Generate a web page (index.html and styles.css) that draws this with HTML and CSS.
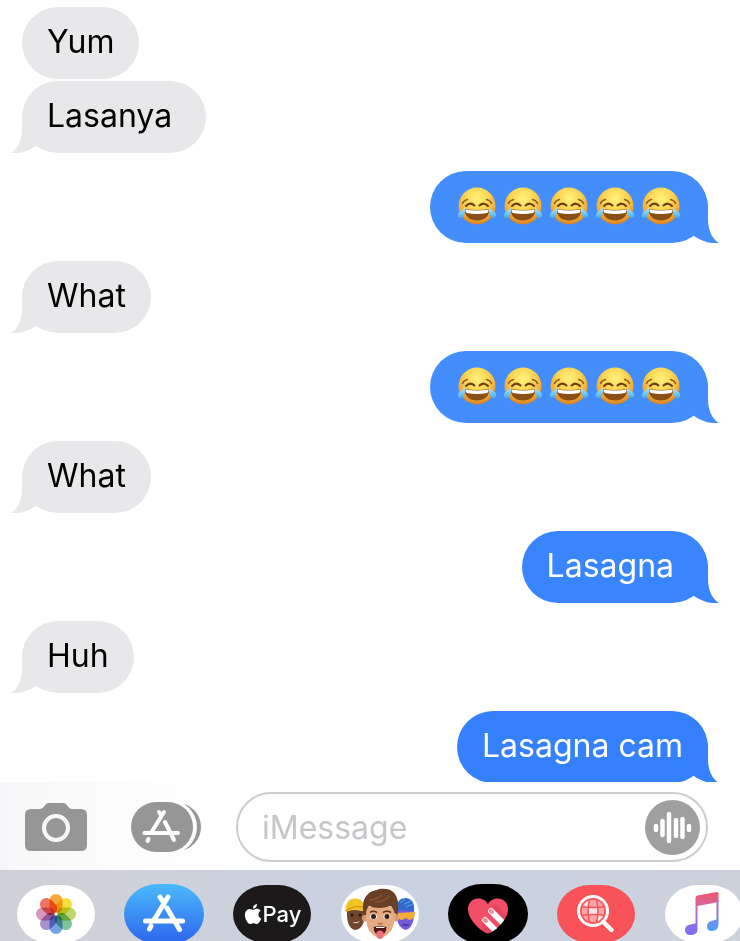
FILE: index.html
```html
<!DOCTYPE html>
<html lang="en">
<head>
    <meta charset="UTF-8">
    <meta name="viewport" content="width=device-width, initial-scale=1">
    <title>Messages</title>
    <link rel="stylesheet" href="styles.css">
</head>
<body>
<!-- shared shapes -->
<svg class="sprite" aria-hidden="true">
    <defs>
        <radialGradient id="face" cx=".5" cy=".3" r=".72">
            <stop offset="0" stop-color="#fff27c"/>
            <stop offset=".45" stop-color="#fbd452"/>
            <stop offset=".8" stop-color="#eda233"/>
            <stop offset="1" stop-color="#d47a1c"/>
        </radialGradient>
        <linearGradient id="tear" x1="0" y1="0" x2="0" y2="1">
            <stop offset="0" stop-color="#b5e9fb"/>
            <stop offset="1" stop-color="#43aee8"/>
        </linearGradient>
        <linearGradient id="note" x1="0" y1="8" x2="0" y2="51" gradientUnits="userSpaceOnUse">
            <stop offset="0" stop-color="#ee5568"/>
            <stop offset=".3" stop-color="#d8669f"/>
            <stop offset=".6" stop-color="#a070d8"/>
            <stop offset="1" stop-color="#7a6cf8"/>
        </linearGradient>
        <linearGradient id="note-right" x1="0" y1="8" x2="0" y2="46" gradientUnits="userSpaceOnUse">
            <stop offset="0" stop-color="#d85a88"/>
            <stop offset=".5" stop-color="#9279dc"/>
            <stop offset="1" stop-color="#4da2fb"/>
        </linearGradient>
        <clipPath id="heart-clip">
            <path d="M40 49.500C36 49.500 20 37 20 25C20 18.500 25 14.500 30.500 14.500C35 14.500 38.500 17 40 20C41.500 17 45 14.500 49.500 14.500C55 14.500 60 18.500 60 25C60 37 44 49.500 40 49.500Z"/>
        </clipPath>
        <clipPath id="globe-clip"><circle cx="37" cy="27" r="12"/></clipPath>
    </defs>
    <symbol id="tail" viewBox="0 0 40 40">
        <path fill="currentColor" d="M28 0V16C28 27 32 36 39 40C30 41 21 38 14 33L0 20Z"/>
    </symbol>
    <symbol id="joy" viewBox="0 0 46 46">
        <circle cx="23" cy="23" r="18.500" fill="url(#face)"/>
        <path d="M8.500 20.500Q9.500 17.500 13.500 16.500M37.500 20.500Q36.500 17.500 32.500 16.500" fill="none" stroke="#935c1d" stroke-width="1.500" stroke-linecap="round"/>
        <path d="M12 23Q16 18.500 20.500 22.500M25.500 22.500Q30 18.500 34 23" fill="none" stroke="#6b3e12" stroke-width="2" stroke-linecap="round"/>
        <path d="M10.500 26Q23 28 35.500 26C35 34 30 37.500 23 37.500C16 37.500 11 34 10.500 26Z" fill="#8a4f14"/>
        <path d="M11.200 26.600Q23 28.400 34.800 26.600Q34.500 29.500 33 30Q23 32 13 30Q11.500 29.500 11.200 26.600Z" fill="#fff"/>
        <path d="M10.500 24.500C12 29 10 35 6.500 35C3.500 35 3 31.500 5 29.500C6.500 28 9 27 10.500 24.500Z" fill="url(#tear)"/>
        <path d="M35.500 24.500C34 29 36 35 39.500 35C42.500 35 43 31.500 41 29.500C39.500 28 37 27 35.500 24.500Z" fill="url(#tear)"/>
    </symbol>
</svg>

<main class="messages">
    <div class="bubble received"><span>Yum</span></div>
    <div class="bubble received">
        <span>Lasanya&nbsp;</span>
        <svg class="tail"><use href="#tail"/></svg>
    </div>
    <div class="bubble sent blue-light">
        <span class="emojis" role="img" aria-label="😂😂😂😂😂">
            <svg><use href="#joy"/></svg><svg><use href="#joy"/></svg><svg><use href="#joy"/></svg><svg><use href="#joy"/></svg><svg><use href="#joy"/></svg>
        </span>
        <svg class="tail"><use href="#tail"/></svg>
    </div>
    <div class="bubble received">
        <span>What</span>
        <svg class="tail"><use href="#tail"/></svg>
    </div>
    <div class="bubble sent blue-light">
        <span class="emojis" role="img" aria-label="😂😂😂😂😂">
            <svg><use href="#joy"/></svg><svg><use href="#joy"/></svg><svg><use href="#joy"/></svg><svg><use href="#joy"/></svg><svg><use href="#joy"/></svg>
        </span>
        <svg class="tail"><use href="#tail"/></svg>
    </div>
    <div class="bubble received">
        <span>What</span>
        <svg class="tail"><use href="#tail"/></svg>
    </div>
    <div class="bubble sent blue-mid">
        <span>Lasagna&nbsp;</span>
        <svg class="tail"><use href="#tail"/></svg>
    </div>
    <div class="bubble received">
        <span>Huh</span>
        <svg class="tail"><use href="#tail"/></svg>
    </div>
    <div class="bubble sent blue-deep">
        <span>Lasagna cam</span>
        <svg class="tail"><use href="#tail"/></svg>
    </div>
</main>

<form class="composer">
    <button type="button" class="tool camera" aria-label="Camera">
        <svg width="62" height="48" viewBox="0 0 62 48">
            <path fill="#969696" d="M6 6H15C17 6 18 5 19 3.500C20.500 1 22 0 24 0H38C40 0 41.500 1 43 3.500C44 5 45 6 47 6H56Q62 6 62 12V42Q62 48 56 48H6Q0 48 0 42V12Q0 6 6 6Z"/>
            <circle cx="31" cy="25" r="12" fill="none" stroke="#f8f8fa" stroke-width="4"/>
        </svg>
    </button>
    <button type="button" class="tool" aria-label="Apps">
        <svg width="70" height="50" viewBox="0 0 70 50">
            <rect x="14" y="1" width="56" height="48" rx="24" fill="#969696"/>
            <rect x="2" y="-2" width="64" height="54" rx="27" fill="#fdfdfe"/>
            <rect width="62" height="50" rx="25" fill="#969696"/>
            <g fill="none" stroke="#fff" stroke-width="4" stroke-linecap="round">
                <path d="M33 10L20 31M28 10L30 13M34 20L43 38M13.500 31H47M17.500 37L16.500 39"/>
            </g>
        </svg>
    </button>
    <div class="field">
        <input type="text" placeholder="iMessage" aria-label="iMessage">
        <button type="button" class="voice" aria-label="Record audio">
            <svg width="55" height="55" viewBox="0 0 55 55">
                <g stroke="#fff" stroke-width="4.500" stroke-linecap="round">
                    <path d="M11 26V30M17.500 21V35M24 14V41M31 20V36M37.500 19V37M44 26V30"/>
                </g>
            </svg>
        </button>
    </div>
</form>

<nav class="apps" aria-label="iMessage apps">
    <button class="app inset white" aria-label="Photos">
        <svg viewBox="0 0 78 58">
            <g class="petals" transform="translate(39 29)">
                <rect x="-6.500" y="-20" width="13" height="19" rx="6.500" fill="#f9a83a"/>
                <rect x="-6.500" y="-20" width="13" height="19" rx="6.500" fill="#f6e13c" transform="rotate(45)"/>
                <rect x="-6.500" y="-20" width="13" height="19" rx="6.500" fill="#bfd86c" transform="rotate(90)"/>
                <rect x="-6.500" y="-20" width="13" height="19" rx="6.500" fill="#7cc49a" transform="rotate(135)"/>
                <rect x="-6.500" y="-20" width="13" height="19" rx="6.500" fill="#74a4e4" transform="rotate(180)"/>
                <rect x="-6.500" y="-20" width="13" height="19" rx="6.500" fill="#a891cc" transform="rotate(225)"/>
                <rect x="-6.500" y="-20" width="13" height="19" rx="6.500" fill="#d798bf" transform="rotate(270)"/>
                <rect x="-6.500" y="-20" width="13" height="19" rx="6.500" fill="#f0735e" transform="rotate(315)"/>
            </g>
            <circle cx="39" cy="29" r="1.500" fill="#fff"/>
        </svg>
    </button>
    <button class="app store" aria-label="App Store">
        <svg viewBox="0 0 80 60">
            <g fill="none" stroke="#fff" stroke-width="5" stroke-linecap="round">
                <path d="M44 13L30 36M36 13L38.500 17M43 24L55.500 45.500M21.500 37H58.500M27 42L25.500 45"/>
            </g>
        </svg>
    </button>
    <button class="app inset pay" aria-label="Apple Pay">
        <svg class="apple" viewBox="0 0 24 24">
            <path fill="#fff" d="M12.152 6.896c-.948 0-2.415-1.078-3.960-1.040-2.040.027-3.910 1.183-4.961 3.014-2.117 3.675-.546 9.103 1.519 12.090 1.013 1.454 2.208 3.090 3.792 3.039 1.520-.065 2.090-.987 3.935-.987 1.831 0 2.350.987 3.960.948 1.637-.026 2.676-1.480 3.676-2.948 1.156-1.688 1.636-3.325 1.662-3.415-.039-.013-3.182-1.221-3.220-4.857-.026-3.040 2.480-4.494 2.597-4.559-1.429-2.090-3.623-2.324-4.390-2.376-2-.156-3.675 1.090-4.610 1.090zM15.530 3.830c.843-1.012 1.400-2.427 1.245-3.830-1.207.052-2.662.805-3.532 1.818-.780.896-1.454 2.338-1.273 3.714 1.338.104 2.715-.688 3.559-1.701"/>
        </svg>
        <span>Pay</span>
    </button>
    <button class="app inset white" aria-label="Memoji">
        <svg viewBox="1 1 78 58">
            <!-- left head -->
            <path d="M7 25Q6 44 15 46Q25 45 25 27Z" fill="#70472d"/>
            <path d="M5.500 28Q5 15 15 14.500Q25 14.500 25 28Q18 23.500 5.500 28Z" fill="#f2c325"/>
            <path d="M6 27Q15 20 25 24" fill="none" stroke="#d49c12" stroke-width="1.500"/>
            <circle cx="12" cy="31" r="1.500" fill="#24150f"/><circle cx="20" cy="31" r="1.500" fill="#24150f"/>
            <path d="M12 38Q16 39 20 37Q17 41 12 38Z" fill="#e9ddd5"/>
            <!-- right head -->
            <path d="M56 26Q56 44 66 46Q75 43 74 25Z" fill="#7658d8"/>
            <path d="M57 26Q56 14 66 14Q75 15 74 27Z" fill="#2e68ca"/>
            <path d="M60 19L65 15M64 20L71 17M66 23L73 20" stroke="#4f8fe0" stroke-width="1.500"/>
            <path d="M57 29L75 28Q75 36 69 36L66 34L62 36Q57 36 57 29Z" fill="#f2ad38"/>
            <path d="M62 41H69" stroke="#4b32a2" stroke-width="1.500"/>
            <!-- middle head -->
            <circle cx="25.500" cy="34" r="3.500" fill="#d99976"/><circle cx="55.500" cy="34" r="3.500" fill="#d99976"/>
            <path d="M26 23Q25 43 31 49Q40 58 49 49Q56 43 55 23Z" fill="#e6aa84"/>
            <path d="M24 31C20 15 28 7 37 6Q39 4 47 5Q61 8 57.500 31L54.500 29Q54 25 51 22Q38 26 29 22Q26 25 26 31Z" fill="#693f26"/>
            <path d="M29 16Q38 16 42 10M35 18Q45 18 49 12" fill="none" stroke="#82532f" stroke-width="1.500"/>
            <path d="M30 28.500Q33 26 37 28.500M43 28.500Q47 26 51 28.500" fill="none" stroke="#5b351f" stroke-width="1.500"/>
            <ellipse cx="33.500" cy="32.500" rx="3.500" ry="2.500" fill="#fff"/><ellipse cx="47" cy="32.500" rx="3.500" ry="2.500" fill="#fff"/>
            <circle cx="33.500" cy="32.500" r="2.500" fill="#352015"/><circle cx="47" cy="32.500" r="2.500" fill="#352015"/>
            <path d="M38 39Q40 41 42.500 39" fill="none" stroke="#bd765a" stroke-width="2"/>
            <path d="M33.500 43Q40 41.500 46.500 43Q46 51 40 51Q34 51 33.500 43Z" fill="#4b1719"/>
            <path d="M36 43.500H44.500" stroke="#fff" stroke-width="1"/>
            <path d="M36.500 48Q40 45 43.500 48V51Q43 55 40 55Q37 55 36.500 51Z" fill="#ec717c"/>
        </svg>
    </button>
    <button class="app black" aria-label="Digital Touch">
        <svg viewBox="0 0 80 60">
            <g clip-path="url(#heart-clip)">
                <rect x="18" y="12" width="44" height="40" fill="#f34e67"/>
                <path d="M35 35L49 50H33ZM42 25L48 20L62 36V46Z" fill="#d03752" opacity=".4"/>
                <path d="M43 27L61 45M37 36L52 51" stroke="#fff" stroke-width="6" stroke-linecap="round"/>
                <path d="M42.500 26.500L44 28M36.500 35.500L38 37" stroke="#f0909c" stroke-width="4" stroke-linecap="round"/>
            </g>
        </svg>
    </button>
    <button class="app inset red" aria-label="Images">
        <svg viewBox="1 1 78 58">
            <circle cx="37" cy="27" r="12" fill="#fba5a7"/>
            <g clip-path="url(#globe-clip)">
                <path d="M33 23H41V31H33ZM26 15H33V23H26ZM42 31H49V39H42Z" fill="#fff" opacity=".7"/>
                <path d="M25 22.500Q37 24.500 49 22.500M25 31.500Q37 29.500 49 31.500M34 14Q30 27 34 40M40 14Q44 27 40 40" fill="none" stroke="#f95258" stroke-width="1.500"/>
            </g>
            <circle cx="37" cy="27" r="12" fill="none" stroke="#f95258" stroke-width="1.500"/>
            <circle cx="37" cy="27" r="14.500" fill="none" stroke="#fff" stroke-width="3"/>
            <path d="M47.500 38L55.500 46" stroke="#fff" stroke-width="4.500" stroke-linecap="round"/>
        </svg>
    </button>
    <button class="app inset white" aria-label="Music">
        <svg viewBox="1 1 78 58">
            <path fill="url(#note)" d="M31.500 14Q31.500 12 33.500 11.500L53 8Q54.500 8 54.500 9.500V18L33.500 22V45Q33.500 51 26.500 51Q21 51 21 46Q21 41.500 26 40.500L31.500 39.500Z"/>
            <path fill="url(#note-right)" d="M52.500 16H54.500V40Q54.500 47 48 47Q43 47 43 42.500Q43 38 47.500 37L52.500 35.500Z"/>
        </svg>
    </button>
</nav>
</body>
</html>
```
FILE: styles.css
```css
* {
    box-sizing: border-box;
}
body {
    margin: 0;
    height: 100vh;
    display: flex;
    flex-direction: column;
    overflow: hidden;
    background: white;
    font-family: Inter, "Liberation Sans", sans-serif;
}
button {
    padding: 0;
    border: none;
    background: none;
    font-family: inherit;
    cursor: pointer;
}
svg {
    display: block;
}
.sprite {
    position: absolute;
    width: 0;
    height: 0;
}

/* conversation */
.messages {
    flex: 1;
    min-height: 0;
    overflow: hidden;
    display: flex;
    flex-direction: column;
    padding: 7px 32px 0 22px;
}
.bubble {
    position: relative;
    flex-shrink: 0;
    max-width: 75%;
    margin-bottom: 18px;
    padding: 13px 25px 15px;
    border-radius: 36px;
    font-size: 32px;
    line-height: 44px;
}
.bubble span {
    position: relative;
    z-index: 1;
}
.bubble:first-child {
    margin-bottom: 2px;
}
.received {
    align-self: flex-start;
    background: #e8e8ea;
    color: #e8e8ea;
}
.received span {
    color: black;
}
.sent {
    align-self: flex-end;
    background: currentColor;
}
.sent span {
    color: white;
}
.blue-light {
    color: #438efc;
}
.blue-mid {
    color: #3985fd;
}
.blue-deep {
    color: #3480fd;
}
.tail {
    position: absolute;
    bottom: 0;
    right: -12px;
    width: 40px;
    height: 40px;
}
.received .tail {
    right: auto;
    left: -12px;
    transform: scaleX(-1);
}
.emojis {
    display: flex;
    align-items: center;
    height: 44px;
    margin: 0 -1px;
}
.emojis svg {
    width: 46px;
    height: 46px;
}

/* input bar */
.composer {
    flex-shrink: 0;
    display: flex;
    align-items: center;
    padding: 10px 32px 8px 25px;
    background: linear-gradient(to right, #f7f7f9, white 200px);
}
.tool {
    margin-right: 35px;
}
.camera {
    margin-right: 44px;
}
.field {
    flex: 1;
    min-width: 0;
    display: flex;
    align-items: center;
    height: 70px;
    padding: 0 6px 0 24px;
    border: 2px solid #cdcdcf;
    border-radius: 35px;
    background: white;
}
.field input {
    flex: 1;
    min-width: 0;
    padding: 0;
    border: none;
    outline: none;
    background: none;
    font-family: inherit;
    font-size: 32px;
}
.field input::placeholder {
    color: #c6c6ca;
    opacity: 1;
}
.voice {
    border-radius: 50%;
    background: #9f9f9f;
}

/* app drawer */
.apps {
    flex-shrink: 0;
    display: flex;
    gap: 28px;
    height: 71px;
    padding: 14px 0 0 16px;
    overflow: hidden;
    background: linear-gradient(to right, #d0d1d7, #c9d2e1 55%, #cdd1dc);
}
.app {
    flex: 0 0 80px;
    height: 60px;
    border-radius: 34px / 30px;
}
.app svg {
    width: 100%;
    height: 100%;
}
.inset {
    border: 1px solid transparent;
    background-clip: padding-box;
}
.white {
    background-color: white;
}
.black {
    background-color: black;
}
.red {
    background-color: #f95258;
}
.store {
    background: linear-gradient(#4bb9fa, #2c65ee);
}
.pay {
    display: flex;
    align-items: center;
    justify-content: center;
    background-color: #1b1919;
    color: white;
    font-size: 22px;
    font-weight: 500;
}
.pay .apple {
    width: 20px;
    height: 20px;
}
.petals rect {
    mix-blend-mode: multiply;
}
```
